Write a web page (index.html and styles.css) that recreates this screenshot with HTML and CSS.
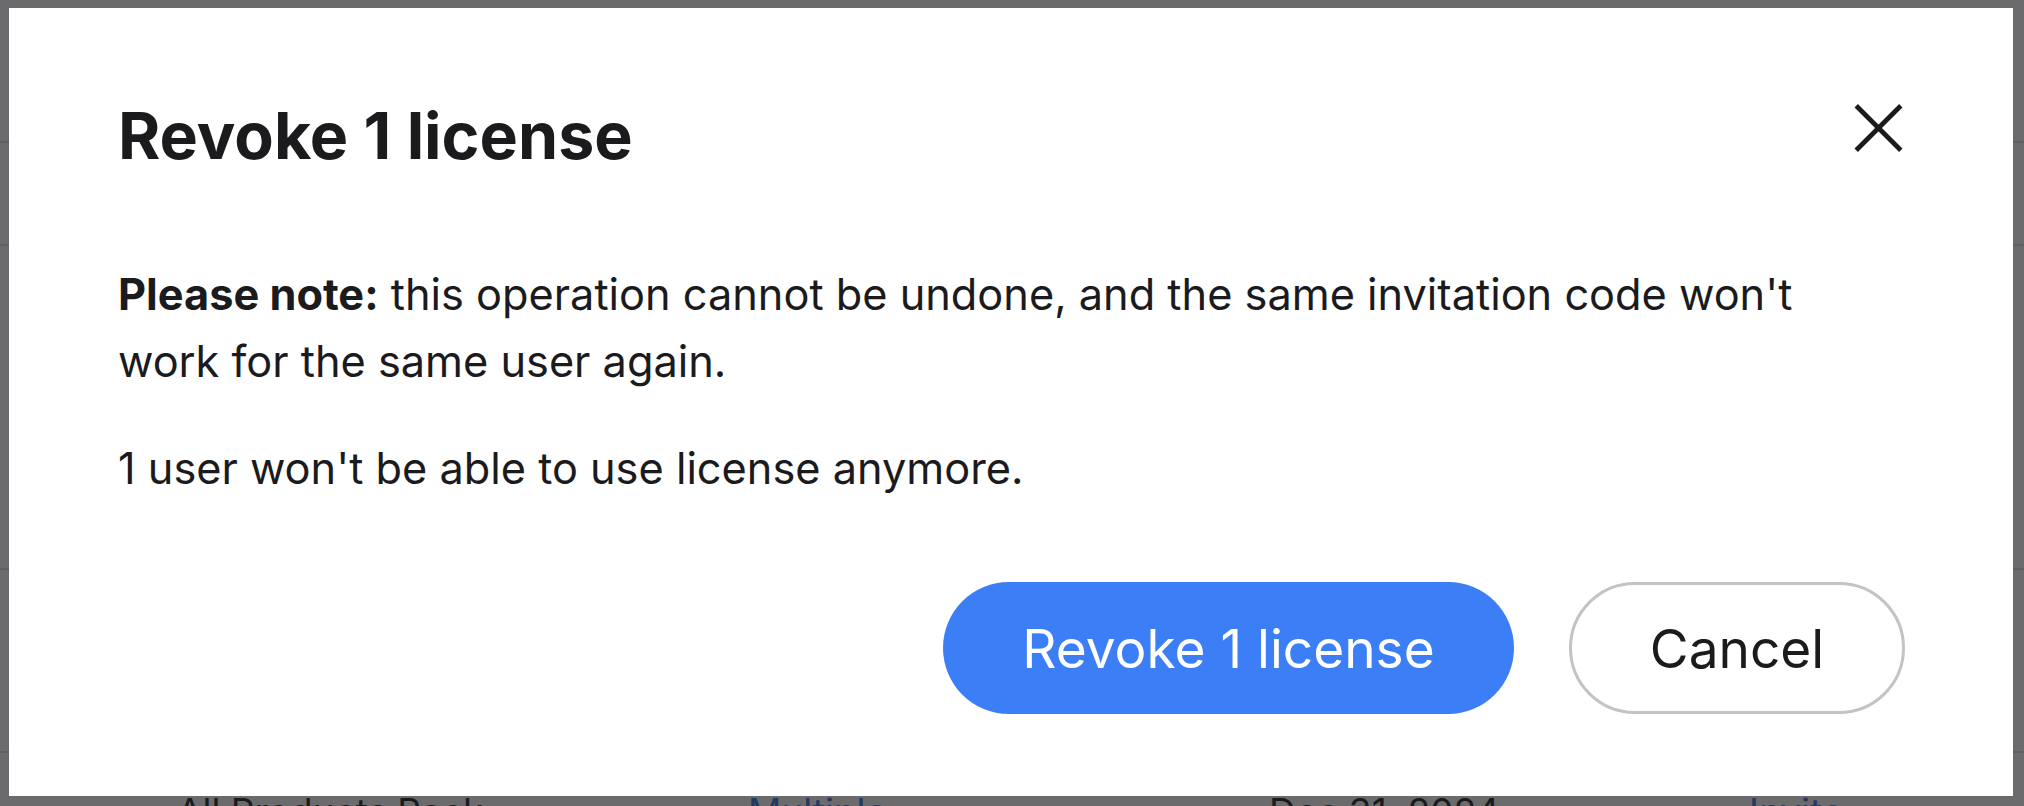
FILE: index.html
```html
<!DOCTYPE html>
<html lang="en">
<head>
  <meta charset="UTF-8">
  <meta name="viewport" content="width=device-width, initial-scale=1.0">
  <title>Licenses - Revoke</title>
  <link rel="stylesheet" href="styles.css">
</head>
<body>
  <!-- page behind the modal, only its edges show through the overlay -->
  <div class="page">
    <div class="row row-head"></div>
    <div class="row row-filter"></div>
    <div class="row row-tall"></div>
    <div class="row row-mid"></div>
    <div class="row row-item">
      <span class="cell">All Products Pack</span>
      <a class="cell link" href="#">Multiple</a>
      <span class="cell">Dec 31, 2024</span>
      <a class="cell link" href="#">Invite</a>
    </div>
  </div>

  <div class="overlay">
    <div class="dialog" role="dialog" aria-labelledby="dialogTitle">
      <div class="dialog-header">
        <h2 id="dialogTitle">Revoke 1 license</h2>
        <button class="close" aria-label="Close">
          <svg width="49" height="48" viewBox="0 0 49 48" aria-hidden="true">
            <path d="M2.2 1.8 L46.8 46.2 M46.8 1.8 L2.2 46.2" stroke="#1b1b1e" stroke-width="4.8" fill="none"/>
          </svg>
        </button>
      </div>

      <p class="note"><strong>Please note:</strong> this operation cannot be undone, and the same invitation code won't work for the same user again.</p>
      <p class="note note-last">1 user won't be able to use license anymore.</p>

      <div class="actions">
        <button class="btn btn-primary">Revoke 1 license</button>
        <button class="btn btn-secondary">Cancel</button>
      </div>
    </div>
  </div>
</body>
</html>
```

FILE: styles.css
```css
* {
  box-sizing: border-box;
}
body {
  margin: 0;
  font-family: Inter, "Noto Sans", Arial, sans-serif;
  color: #1b1b1e;
  background: #fff;
  overflow: hidden;
}

/* background page */
.page {
  height: 806px;
}
.row {
  border-bottom: 2px solid #dcdcdf;
}
.row-head {
  height: 143px;
}
.row-filter {
  height: 103px;
}
.row-tall {
  height: 324px;
}
.row-mid {
  height: 183px;
}
.row-item {
  border-bottom: none;
  display: grid;
  grid-template-columns: 571px 521px 480px 1fr;
  padding: 37px 0 0 177px;
  font-size: 37px;
  line-height: 44px;
}
.link {
  color: #3670d6;
  text-decoration: none;
}

/* modal */
.overlay {
  position: fixed;
  inset: 0;
  display: flex;
  padding: 8px 11px 10px 9px;
  background: rgba(28, 28, 30, 0.65);
}
.dialog {
  flex: 1;
  background: #fff;
  padding: 92px 108px 0 109px;
}
.dialog-header {
  display: flex;
  justify-content: space-between;
  align-items: flex-start;
  margin-bottom: 89px;
}
.dialog-header h2 {
  margin: 0;
  font-size: 64.5px;
  line-height: 72px;
  font-weight: 700;
}
.close {
  margin: 4px 2px 0 0;
  padding: 0;
  border: none;
  background: none;
  width: 49px;
  height: 48px;
  cursor: pointer;
}
.close svg {
  display: block;
}
.note {
  margin: 0 0 40px;
  max-width: 1740px;
  font-size: 43.3px;
  line-height: 67px;
}
.note strong {
  font-weight: 700;
}
.note-last {
  margin-bottom: 0;
}
.actions {
  display: flex;
  justify-content: flex-end;
  gap: 55px;
  margin-top: 80px;
}
.btn {
  height: 132px;
  border-radius: 66px;
  font-family: inherit;
  font-size: 53.2px;
  font-weight: 400;
  cursor: pointer;
}
.btn-primary {
  width: 571px;
  border: none;
  background: #3c7ef6;
  color: #fff;
}
.btn-secondary {
  width: 336px;
  border: 3px solid #c3c3c3;
  background: #fff;
  color: #1b1b1e;
}
```
